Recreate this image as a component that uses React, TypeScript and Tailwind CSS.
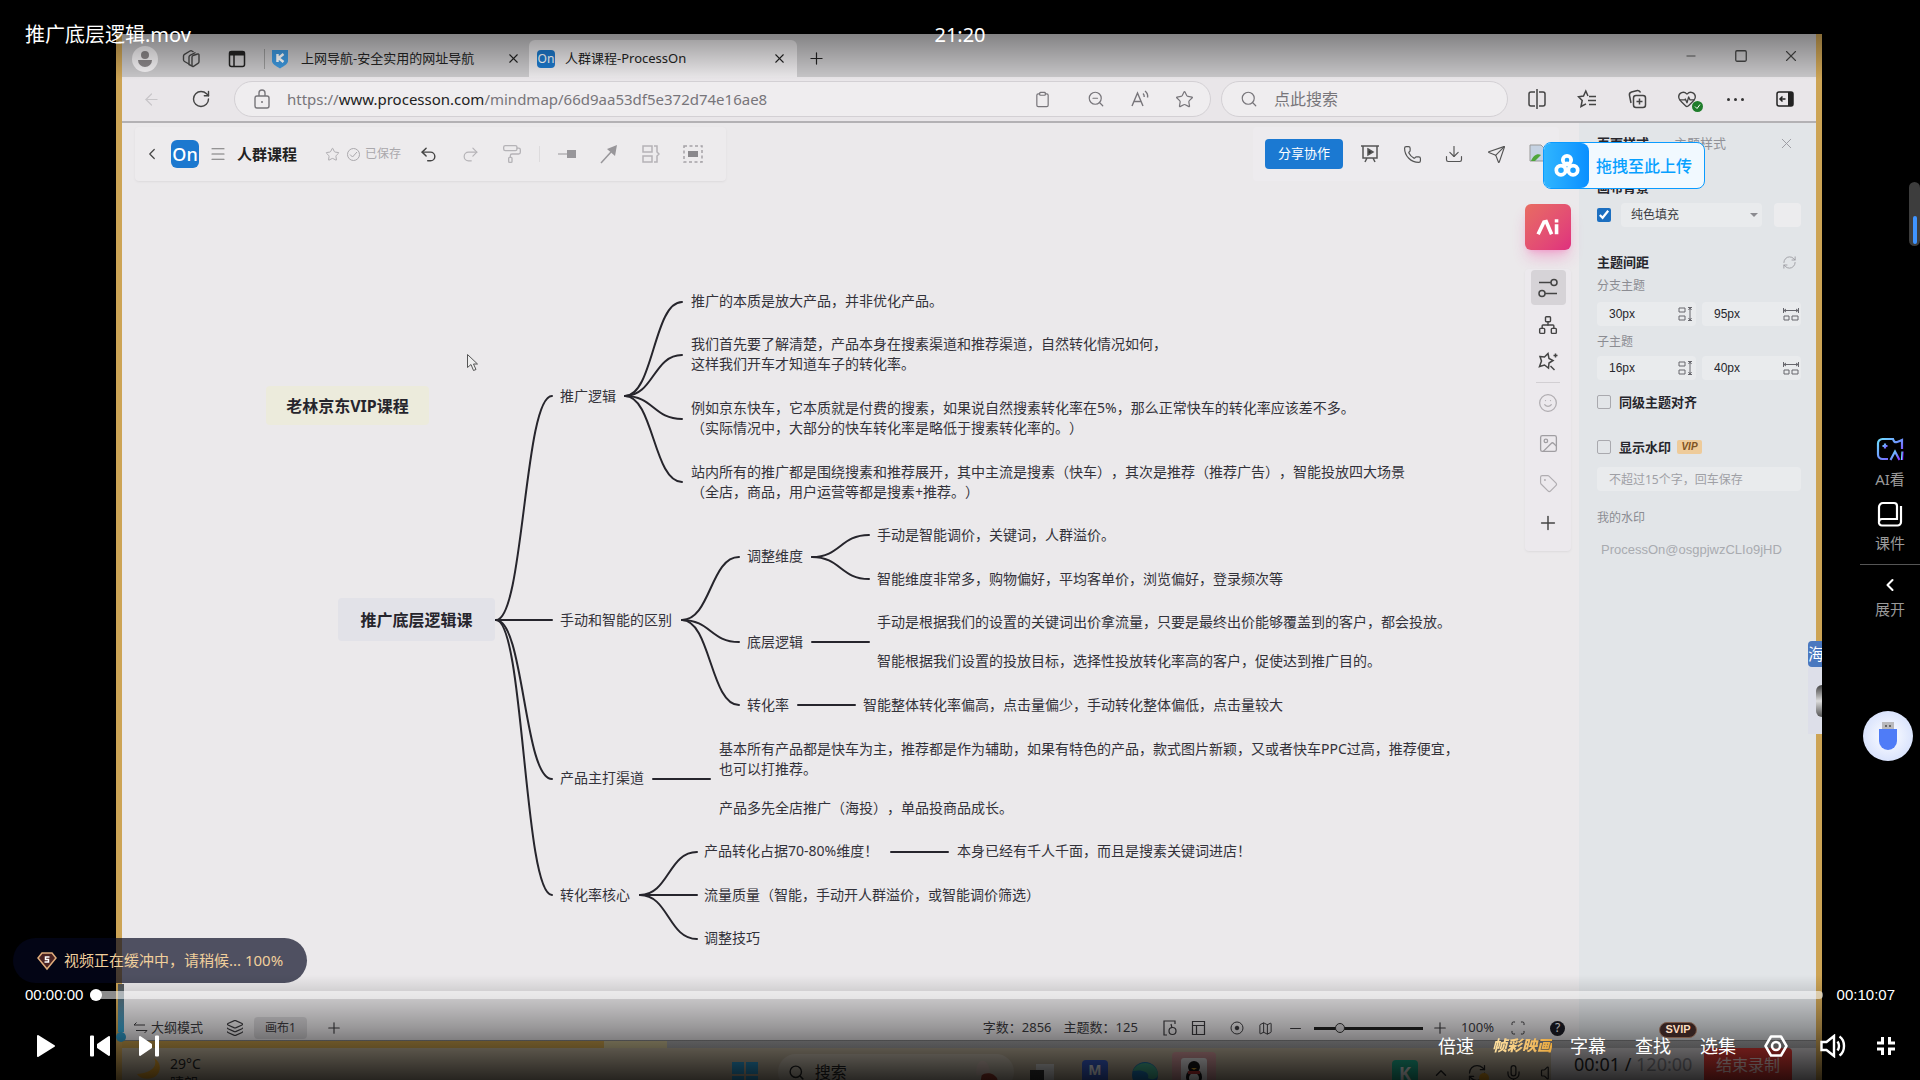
import type { ReactNode } from "react";
import {
  ArrowLeft,
  ChevronLeft,
  ChevronUp,
  Clipboard,
  Columns2,
  Download,
  HeartPulse,
  Image,
  Layers,
  Lock,
  Map as MapIcon,
  Menu,
  Mic,
  Minus,
  Network,
  PaintRoller,
  Phone,
  Plus,
  Redo2,
  RefreshCw,
  RotateCw,
  Scan,
  Search,
  Send,
  Smile,
  Square,
  Star,
  Tag,
  Undo2,
  Volume2,
  X,
  ZoomOut,
} from "lucide-react";

type MapNode = { x: number; y: number; lines: string[] };

// x is the left edge of the text, y the middle of the block
const nodes: MapNode[] = [
  { x: 569, y: 178, lines: ["推广的本质是放大产品，并非优化产品。"] },
  {
    x: 569,
    y: 231,
    lines: [
      "我们首先要了解清楚，产品本身在搜素渠道和推荐渠道，自然转化情况如何，",
      "这样我们开车才知道车子的转化率。",
    ],
  },
  {
    x: 569,
    y: 295,
    lines: [
      "例如京东快车，它本质就是付费的搜素，如果说自然搜素转化率在5%，那么正常快车的转化率应该差不多。",
      "（实际情况中，大部分的快车转化率是略低于搜素转化率的。）",
    ],
  },
  {
    x: 569,
    y: 359,
    lines: [
      "站内所有的推广都是围绕搜素和推荐展开，其中主流是搜素（快车），其次是推荐（推荐广告），智能投放四大场景",
      "（全店，商品，用户运营等都是搜素+推荐。）",
    ],
  },
  { x: 438, y: 273, lines: ["推广逻辑"] },
  { x: 438, y: 497, lines: ["手动和智能的区别"] },
  { x: 625, y: 433, lines: ["调整维度"] },
  { x: 755, y: 412, lines: ["手动是智能调价，关键词，人群溢价。"] },
  {
    x: 755,
    y: 456,
    lines: ["智能维度非常多，购物偏好，平均客单价，浏览偏好，登录频次等"],
  },
  { x: 625, y: 519, lines: ["底层逻辑"] },
  {
    x: 755,
    y: 499,
    lines: [
      "手动是根据我们的设置的关键词出价拿流量，只要是最终出价能够覆盖到的客户，都会投放。",
    ],
  },
  {
    x: 755,
    y: 538,
    lines: ["智能根据我们设置的投放目标，选择性投放转化率高的客户，促使达到推广目的。"],
  },
  { x: 625, y: 582, lines: ["转化率"] },
  {
    x: 741,
    y: 582,
    lines: ["智能整体转化率偏高，点击量偏少，手动转化整体偏低，点击量较大"],
  },
  { x: 438, y: 655, lines: ["产品主打渠道"] },
  {
    x: 597,
    y: 636,
    lines: [
      "基本所有产品都是快车为主，推荐都是作为辅助，如果有特色的产品，款式图片新颖，又或者快车PPC过高，推荐便宜，",
      "也可以打推荐。",
    ],
  },
  { x: 597, y: 685, lines: ["产品多先全店推广（海投），单品投商品成长。"] },
  { x: 438, y: 772, lines: ["转化率核心"] },
  { x: 582, y: 728, lines: ["产品转化占据70-80%维度！"] },
  { x: 835, y: 728, lines: ["本身已经有千人千面，而且是搜素关键词进店！"] },
  { x: 582, y: 772, lines: ["流量质量（智能，手动开人群溢价，或智能调价筛选）"] },
  { x: 582, y: 815, lines: ["调整技巧"] },
];

// [x1, y1, x2, y2]
const edges = [
  [374, 497, 430, 273],
  [374, 497, 430, 497],
  [374, 497, 430, 656],
  [374, 497, 430, 772],
  [503, 273, 560, 179],
  [503, 273, 560, 232],
  [503, 273, 560, 296],
  [503, 273, 560, 359],
  [560, 497, 617, 434],
  [560, 497, 617, 519],
  [560, 497, 617, 582],
  [690, 434, 747, 412],
  [690, 434, 747, 456],
  [690, 519, 747, 519],
  [676, 582, 733, 582],
  [531, 656, 588, 656],
  [518, 772, 575, 729],
  [518, 772, 575, 772],
  [518, 772, 575, 816],
  [769, 729, 826, 729],
];

const edgePath = ([x1, y1, x2, y2]: number[]) => {
  const mid = (x1 + x2) / 2;
  return `M${x1} ${y1} C${mid} ${y1} ${mid} ${y2} ${x2} ${y2}`;
};

const IconButton = ({
  label,
  className = "",
  children,
}: {
  label: string;
  className?: string;
  children: ReactNode;
}) => (
  <button
    type="button"
    aria-label={label}
    className={`flex shrink-0 items-center justify-center ${className}`}
  >
    {children}
  </button>
);

const BrowserTabs = () => (
  <div className="flex h-[43px] shrink-0 items-end bg-[#c9c8ca] text-[13px] text-[#222]">
    <div className="flex h-[37px] items-center">
      <IconButton label="用户" className="w-[46px]">
        <span className="flex size-[26px] flex-col items-center justify-center gap-px rounded-full bg-[#f4f2f4]">
          <span className="size-2 rounded-full bg-[#8b8789]" />
          <span className="h-[7px] w-3.5 rounded-t-sm rounded-b-full bg-[#8b8789]" />
        </span>
      </IconButton>
      <IconButton label="工作区" className="w-[46px]">
        <svg width="20" height="20" viewBox="0 0 20 20" fill="none" stroke="#444" strokeWidth="1.4">
          <path d="M12 6.5l4.500-1.500a1 1 0 011.500 1v6.500a2 2 0 01-1 1.800l-4.500 3a1 1 0 01-1.500-.8V8.200a2 2 0 011-1.700z" />
          <path d="M11 17l-3-1.500V8a2 2 0 011-1.700L14.500 3.500" />
          <path d="M8 15l-4.500-2.500a2 2 0 01-1-1.700V7a2 2 0 011-1.700L9 2a2 2 0 012 0l1.500.8" />
        </svg>
      </IconButton>
      <IconButton label="标签页操作" className="w-[46px]">
        <svg width="18" height="18" viewBox="0 0 18 18" fill="none" stroke="#222" strokeWidth="1.500">
          <rect x="1.500" y="1.500" width="15" height="15" rx="2" />
          <path d="M1.500 3.500h15" strokeWidth="4" />
          <path d="M6 5v11" />
        </svg>
      </IconButton>
    </div>
    <div className="mb-2 ml-1 h-5 w-px bg-[#999]" />
    <div className="flex h-[37px] w-[264px] items-center gap-3 pr-2 pl-1.5">
      <svg width="18" height="20" viewBox="0 0 18 20">
        <path d="M1 1h16v11c0 3-4 5-8 7.500C5 17 1 15 1 12z" fill="#3d97dd" />
        <path d="M6.500 5v8M12.500 5L7.500 9l5 4" stroke="#fff" strokeWidth="2.500" fill="none" />
      </svg>
      <span className="flex-1 whitespace-nowrap">上网导航-安全实用的网址导航</span>
      <IconButton label="关闭标签页">
        <X size={15} strokeWidth={1.7} />
      </IconButton>
    </div>
    <div className="flex h-[37px] w-[268px] items-center gap-2.5 rounded-t-md bg-[#ebe9eb] pr-2.5 pl-2">
      <span className="flex size-[18px] items-center justify-center rounded-sm bg-[#1d79cc] text-xs text-white">
        On
      </span>
      <span className="flex-1 whitespace-nowrap">人群课程-ProcessOn</span>
      <IconButton label="关闭标签页">
        <X size={15} strokeWidth={1.7} />
      </IconButton>
    </div>
    <IconButton label="新建标签页" className="ml-2.5 h-[37px]">
      <Plus size={19} strokeWidth={1.5} />
    </IconButton>
    <div className="ml-auto flex h-[43px] text-[#444]">
      <IconButton label="最小化" className="w-[50px]">
        <Minus size={14} strokeWidth={1.5} />
      </IconButton>
      <IconButton label="最大化" className="w-[50px]">
        <Square size={14} strokeWidth={2.2} />
      </IconButton>
      <IconButton label="关闭" className="w-[50px]">
        <X size={18} strokeWidth={1.5} />
      </IconButton>
    </div>
  </div>
);

const AddressBar = () => (
  <div className="flex h-[46px] shrink-0 items-center border-b-2 border-[#b3b1b4] bg-[#e9e6e9] px-1 text-[#444]">
    <IconButton label="后退" className="w-[50px] text-[#c8c6c9]">
      <ArrowLeft size={19} strokeWidth={1.5} />
    </IconButton>
    <IconButton label="刷新" className="w-[50px]">
      <RotateCw size={20} strokeWidth={1.7} />
    </IconButton>
    <div className="mr-2.5 ml-2 flex h-9 min-w-0 flex-1 items-center gap-4 rounded-full border border-[#d3d0d4] bg-[#efedef] pr-1 pl-[18px]">
      <svg width="18" height="20" viewBox="0 0 18 20" fill="none" stroke="#77757a" strokeWidth="1.400" className="shrink-0">
        <rect x="2" y="7" width="14" height="12" rx="2" />
        <path d="M6 7V4a3 3 0 016 0v3" />
        <circle cx="9" cy="13" r="1" fill="#77757a" stroke="none" />
      </svg>
      <span className="min-w-0 flex-1 overflow-hidden text-[15px] whitespace-nowrap text-[#77757a]">
        https://<span className="text-[#222]">www.processon.com</span>
        /mindmap/66d9aa53df5e372d74e16ae8
      </span>
      <div className="flex text-[#77757a]">
        <IconButton label="粘贴" className="mr-2.5 w-11">
          <Clipboard size={17} strokeWidth={1.7} />
        </IconButton>
        <IconButton label="缩放" className="w-11">
          <ZoomOut size={18} strokeWidth={1.6} />
        </IconButton>
        <IconButton label="朗读" className="w-11">
          <svg width="18" height="18" viewBox="0 0 18 18" fill="none" stroke="currentColor" strokeWidth="1.400">
            <path d="M1 16L6.500 3 12 16M3 11.500h7M12 3.500c1 .8 1.300 2 1.200 3.500M14 1c2 1.500 3 3.500 2.600 6.500" />
          </svg>
        </IconButton>
        <IconButton label="收藏" className="w-11">
          <Star size={19} strokeWidth={1.5} />
        </IconButton>
      </div>
    </div>
    <label className="mr-1 flex h-9 w-[287px] items-center gap-4 rounded-full border border-[#d3d0d4] bg-[#efedef] pl-[18px]">
      <Search size={18} strokeWidth={1.6} className="text-[#77757a]" />
      <input
        aria-label="搜索"
        placeholder="点此搜索"
        className="w-40 bg-transparent text-base outline-none placeholder:text-[#77757a]"
      />
    </label>
    <IconButton label="分屏" className="w-[50px]">
      <svg width="18" height="20" viewBox="0 0 18 20" fill="none" stroke="currentColor" strokeWidth="1.500">
        <path d="M7 3H3a2 2 0 00-2 2v10a2 2 0 002 2h4M11 3h4a2 2 0 012 2v10a2 2 0 01-2 2h-4M9 0v20" />
      </svg>
    </IconButton>
    <IconButton label="收藏夹" className="w-[50px]">
      <svg width="20" height="20" viewBox="0 0 20 20" fill="none" stroke="currentColor" strokeWidth="1.500">
        <path d="M11 7L8.800 2 6.500 7l-5 .7L5.200 11.500 4 17.500l5-2.700M12 7.500h7M11 11.500h8M12 15.500h7" />
      </svg>
    </IconButton>
    <IconButton label="集锦" className="w-[50px]">
      <svg width="20" height="20" viewBox="0 0 20 20" fill="none" stroke="currentColor" strokeWidth="1.500">
        <rect x="6.500" y="6.500" width="12" height="12" rx="2.500" />
        <path d="M12.500 9.500v6M9.500 12.500h6M4 14l-1.500-7.500A3 3 0 014.500 3l6-1.500a3 3 0 013 2" />
      </svg>
    </IconButton>
    <IconButton label="浏览器概要" className="relative w-[50px]">
      <HeartPulse size={20} strokeWidth={1.6} />
      <span className="absolute right-[9px] -bottom-[3px] flex size-[11px] items-center justify-center rounded-full bg-[#1f7d2b]">
        <svg width="7" height="7" viewBox="0 0 7 7" fill="none" stroke="#fff">
          <path d="M1 3.500l2 2 3-4" />
        </svg>
      </span>
    </IconButton>
    <IconButton label="更多" className="w-[46px] gap-1">
      <span className="size-[3px] rounded-full bg-[#333]" />
      <span className="size-[3px] rounded-full bg-[#333]" />
      <span className="size-[3px] rounded-full bg-[#333]" />
    </IconButton>
    <IconButton label="侧边栏" className="w-[54px]">
      <svg width="18" height="16" viewBox="0 0 18 16" fill="none" stroke="#222" strokeWidth="1.500">
        <rect x="1" y="1" width="16" height="14" rx="2" />
        <path d="M14.500 1v14" strokeWidth="5" />
        <path d="M9.500 8H4M6.500 5.500L4 8l2.500 2.500" />
      </svg>
    </IconButton>
  </div>
);

const MindMap = () => (
  <div className="absolute inset-0 overflow-hidden text-sm leading-5 whitespace-nowrap text-[#33323a] [text-spacing-trim:space-all]">
    <svg width="900" height="860" fill="none" stroke="#26252c" strokeWidth="2" strokeLinecap="round">
      {edges.map((edge) => (
        <path key={edge.join()} d={edgePath(edge)} />
      ))}
    </svg>
    {nodes.map(({ x, y, lines }) => (
      <div key={lines[0]} className="absolute" style={{ left: x, top: y - lines.length * 10 }}>
        {lines.map((line) => (
          <p key={line}>{line}</p>
        ))}
      </div>
    ))}
    <div className="absolute top-[263px] left-[144px] flex h-[39px] w-[163px] items-center justify-center rounded-sm bg-[#ecebdc] text-base font-bold text-[#26252c]">
      老林京东VIP课程
    </div>
    <div className="absolute top-[475px] left-[216px] flex h-[43px] w-[157px] items-center justify-center rounded-sm bg-[#e2e2e8] text-base font-bold text-[#26252c]">
      推广底层逻辑课
    </div>
    <svg className="absolute top-[230px] left-[344px]" width="14" height="19" viewBox="0 0 14 19">
      <path d="M1.500 1.500v13l3.500-3 2.500 6 2.500-1-2.500-5.500h4z" fill="#eee" stroke="#555" />
    </svg>
  </div>
);

const EditorHeader = () => (
  <header className="relative mt-1 flex items-start">
    <div className="ml-[13px] flex h-[54px] items-center rounded bg-[#edebed] pr-3 pl-2 text-[#444] shadow-sm shadow-black/5">
      <div className="flex items-center gap-2.5">
        <IconButton label="返回">
          <ChevronLeft size={18} strokeWidth={1.6} />
        </IconButton>
        <span className="flex size-7 items-center justify-center rounded-md bg-[#1c78cf] text-lg font-medium text-white">
          On
        </span>
        <IconButton label="菜单" className="text-[#777]">
          <Menu size={18} strokeWidth={1.5} />
        </IconButton>
        <span className="text-[15px] font-bold text-[#222]">人群课程</span>
      </div>
      <div className="ml-7 flex items-center text-xs text-[#aaa8ac]">
        <IconButton label="收藏">
          <Star size={15} strokeWidth={1.5} />
        </IconButton>
        <svg className="mr-1 ml-1.5" width="15" height="15" viewBox="0 0 15 15" fill="none" stroke="currentColor">
          <circle cx="7.500" cy="7.500" r="6" />
          <path d="M4 7.500l2.500 2.500L11 5" />
        </svg>
        已保存
      </div>
      <div className="ml-1.5 flex items-center text-[#b5b3b7]">
        <IconButton label="撤销" className="w-[42px] text-[#444]">
          <Undo2 size={19} strokeWidth={1.8} />
        </IconButton>
        <IconButton label="重做" className="w-[42px]">
          <Redo2 size={19} strokeWidth={1.5} />
        </IconButton>
        <IconButton label="格式刷" className="w-[42px]">
          <PaintRoller size={20} strokeWidth={1.6} />
        </IconButton>
        <div className="mx-1.5 h-4 w-px bg-[#dddbdd]" />
        <IconButton label="子主题" className="w-[42px]">
          <svg width="18" height="10" viewBox="0 0 18 10" fill="#98969a">
            <path d="M0 4.500h9v1H0zM9 1h9v8H9z" />
          </svg>
        </IconButton>
        <IconButton label="关系线" className="w-[42px]">
          <svg width="18" height="20" viewBox="0 0 18 20">
            <path d="M1 19L11 8" stroke="#98969a" strokeWidth="1.500" />
            <path d="M17 1L7 5l8 7z" fill="#98969a" />
          </svg>
        </IconButton>
        <IconButton label="概要" className="w-[42px]">
          <svg width="18" height="18" viewBox="0 0 18 18" fill="none" stroke="currentColor" strokeWidth="1.500">
            <path d="M1 1h9v6H1zM1 11h9v6H1zM12 1h3v6l2 2-2 2v6h-3" />
          </svg>
        </IconButton>
        <IconButton label="外框" className="w-[42px]">
          <svg width="20" height="18" viewBox="0 0 20 18" fill="none" stroke="#a5a3a7" strokeWidth="1.500">
            <rect x="1" y="1" width="18" height="16" strokeDasharray="3 2.500" />
            <rect x="5" y="6" width="10" height="6" fill="#8a888c" stroke="none" />
          </svg>
        </IconButton>
      </div>
    </div>
    <div className="mr-5 ml-auto flex h-[54px] items-center rounded bg-[#edebee] pl-3 text-[#555]">
      <button type="button" className="mr-1.5 h-[30px] w-[78px] rounded-sm bg-[#1b79d2] text-[13px] text-white">
        分享协作
      </button>
      <IconButton label="演示" className="w-[42px]">
        <svg width="18" height="20" viewBox="0 0 18 20" fill="none" stroke="currentColor" strokeWidth="1.500">
          <path d="M0 2h18M2 2v12h14V2M6 14l-2 4M12 14l2 4" />
          <path d="M7 5l5 3-5 3z" fill="#333" />
        </svg>
      </IconButton>
      <IconButton label="通话" className="w-[42px]">
        <Phone size={19} strokeWidth={1.5} />
      </IconButton>
      <IconButton label="下载" className="w-[42px]">
        <Download size={20} strokeWidth={1.4} />
      </IconButton>
      <IconButton label="分享" className="w-[42px]">
        <Send size={19} strokeWidth={1.5} />
      </IconButton>
      <IconButton label="头像" className="w-[42px]">
        <svg width="18" height="20" viewBox="0 0 18 20">
          <path d="M1 1h11l5 5v11H1z" fill="#c5d2e2" stroke="#999" />
          <path d="M2 17c2-5 6-8 10-6l-6 6z" fill="#4ea63a" />
        </svg>
      </IconButton>
    </div>
  </header>
);

const SideTools = () => (
  <div className="relative mr-2 flex flex-col items-center self-end pt-[23px] text-[#444]">
    <button
      type="button"
      aria-label="AI 助手"
      className="flex size-[46px] items-center justify-center rounded-md bg-linear-to-br from-[#e86c61] to-[#df2f7e] shadow-lg shadow-pink-500/30"
    >
      <svg width="24" height="18" viewBox="0 0 26 20" fill="none" stroke="#fff" strokeWidth="4">
        <path d="M2 18L8.500 4.500 11 4l6 14M22.500 7v11M22.500 1.500v3.500" />
      </svg>
    </button>
    <div className="mt-[19px] flex w-[46px] flex-col items-center rounded bg-[#ece9ed] pb-2 shadow-sm shadow-black/5">
      <IconButton label="样式" className="h-[37px]">
        <span className="flex size-[35px] items-center justify-center rounded-sm bg-[#d6d3d7]">
          <svg width="20" height="20" viewBox="0 0 20 20" fill="none" stroke="currentColor" strokeWidth="1.500">
            <circle cx="16" cy="4.500" r="3" />
            <circle cx="4" cy="15.500" r="3" />
            <path d="M1 4.500h12M7 15.500h12" />
          </svg>
        </span>
      </IconButton>
      <IconButton label="结构" className="h-[37px]">
        <Network size={20} strokeWidth={1.7} />
      </IconButton>
      <IconButton label="主题" className="h-[37px]">
        <svg width="20" height="20" viewBox="0 0 20 20" fill="none" stroke="currentColor" strokeWidth="1.500">
          <path d="M2 4.500l4.500.5L10 1.500l1 5 4 2-4 2.500-.5 5-4-3-5 1.500L3.500 9z" />
          <path d="M12.500 14l4 4" />
          <path d="M17.500 1.500v4M15.500 3.500h4" />
        </svg>
      </IconButton>
      <div className="mt-0.5 h-px w-6 bg-[#d2cfd3]" />
      <IconButton label="表情" className="h-10 text-[#b0adb1]">
        <Smile size={20} strokeWidth={1.5} />
      </IconButton>
      <IconButton label="图片" className="h-10 text-[#a09ea2]">
        <Image size={21} strokeWidth={1.5} />
      </IconButton>
      <IconButton label="标签" className="h-10 text-[#b0adb1]">
        <Tag size={19} strokeWidth={1.5} />
      </IconButton>
      <IconButton label="添加" className="h-10">
        <Plus size={22} strokeWidth={1.6} />
      </IconButton>
    </div>
  </div>
);

const StatusBar = () => (
  <footer className="relative mt-auto flex h-6 items-center pr-3.5 pl-[11px] text-[13px] whitespace-nowrap text-[#3c3b3f]">
    <svg width="16" height="12" viewBox="0 0 16 12" fill="none" stroke="currentColor">
      <path d="M3.500 .5L1 3h11M3 8.500h11L11.500 11" />
    </svg>
    <span className="ml-0.5">大纲模式</span>
    <Layers size={18} strokeWidth={1.5} className="ml-[23px]" />
    <button type="button" className="ml-2.5 h-[22px] w-[53px] rounded-sm bg-[#d3d1d4] text-xs">
      画布1
    </button>
    <IconButton label="新建画布" className="ml-[18px]">
      <Plus size={18} strokeWidth={1.5} />
    </IconButton>
    <span className="ml-auto">字数：2856</span>
    <span className="ml-3">主题数：125</span>
    <div className="ml-6 flex items-center gap-[13px]">
      <svg width="16" height="16" viewBox="0 0 16 16" fill="none" stroke="currentColor" strokeWidth="1.200">
        <path d="M5 15H2V1h11v3" />
        <circle cx="10.500" cy="11" r="3.500" />
        <path d="M9 4l1 4" />
      </svg>
      <svg width="15" height="16" viewBox="0 0 15 16" fill="none" stroke="currentColor" strokeWidth="1.200">
        <path d="M1.500 1.500h12v13h-12zM1.500 5.500h12M5.500 5.500v9" />
      </svg>
    </div>
    <svg className="ml-6" width="14" height="14" viewBox="0 0 14 14" fill="none" stroke="currentColor">
      <circle cx="7" cy="7" r="6" />
      <circle cx="7" cy="7" r="1.800" fill="currentColor" />
    </svg>
    <MapIcon size={15} strokeWidth={1.6} className="ml-3.5" />
    <IconButton label="缩小" className="mr-2.5 ml-3.5">
      <Minus size={17} strokeWidth={1.5} />
    </IconButton>
    <input
      type="range"
      aria-label="画布缩放"
      defaultValue={21}
      className="h-[3px] w-[109px] appearance-none bg-[#222] [&::-webkit-slider-thumb]:size-[10px] [&::-webkit-slider-thumb]:appearance-none [&::-webkit-slider-thumb]:rounded-full [&::-webkit-slider-thumb]:border [&::-webkit-slider-thumb]:border-[#333] [&::-webkit-slider-thumb]:bg-[#d8d6d9]"
    />
    <IconButton label="放大" className="ml-2">
      <Plus size={18} strokeWidth={1.5} />
    </IconButton>
    <span className="ml-3">100%</span>
    <Scan size={16} strokeWidth={1.5} className="ml-4" />
    <span className="ml-6 flex size-[15px] items-center justify-center rounded-full bg-[#1c1c26] text-xs text-white">
      ?
    </span>
  </footer>
);

const SpacingField = ({
  label,
  value,
  vertical,
}: {
  label: string;
  value: string;
  vertical?: boolean;
}) => (
  <label className="flex h-6 flex-1 items-center justify-between rounded-sm bg-[#e9ebed] pr-0.5 pl-3">
    <input
      aria-label={label}
      defaultValue={value}
      className="w-12 bg-transparent font-['Liberation_Sans',sans-serif] text-xs outline-none"
    />
    <svg width="16" height="14" viewBox="0 0 16 14" fill="none" stroke="#66666c">
      {vertical ? (
        <path d="M1 1h6v4H1zM1 9h6v4H1zM10 .5h4M10 13.500h4M12 1v12M10.500 3L12 1l1.500 2M10.500 11l1.500 2 1.500-2" />
      ) : (
        <path d="M1 9h5v4H1zM9 9h6v4H9zM.5 1v5M15.500 1v5M1 3.500h14M3 2L1 3.500 3 5M13 2l2 1.500L13 5" />
      )}
    </svg>
  </label>
);

const StylePanel = () => (
  <aside className="flex w-[237px] shrink-0 flex-col bg-[#e2e5e8] pt-2.5 pr-[15px] pl-[18px] text-[13px] leading-5 text-[#26262c]">
    <div className="flex items-center">
      <h2 className="font-bold">页面样式</h2>
      <span className="ml-[25px] text-[#909197]">主题样式</span>
      <IconButton label="关闭面板" className="mr-1.5 ml-auto text-[#99999f]">
        <X size={17} strokeWidth={1.3} />
      </IconButton>
    </div>
    <h3 className="mt-6 font-bold">画布背景</h3>
    <div className="mt-1.5 flex h-6 items-center">
      <input type="checkbox" aria-label="画布背景" defaultChecked className="size-3.5 accent-[#1c6fc0]" />
      <span className="relative mr-3 ml-2.5 flex-1">
        <select
          aria-label="填充方式"
          className="h-6 w-full appearance-none rounded-sm bg-[#e9ebed] pl-2.5 text-xs text-[#3c3c42]"
        >
          <option>纯色填充</option>
        </select>
        <span className="absolute top-2.5 right-1 border-x-4 border-t-4 border-x-transparent border-t-[#8b8b90]" />
      </span>
      <button type="button" aria-label="填充颜色" className="h-6 w-[27px] rounded-sm bg-[#ececee]" />
    </div>
    <div className="mt-[25px] flex items-center justify-between pr-1">
      <h3 className="font-bold">主题间距</h3>
      <IconButton label="重置间距" className="text-[#99999f]">
        <RefreshCw size={15} strokeWidth={1.4} />
      </IconButton>
    </div>
    <p className="mt-1 text-xs leading-5 text-[#8b8c92]">分支主题</p>
    <div className="mt-1.5 flex gap-1.5">
      <SpacingField label="分支主题垂直间距" value="30px" vertical />
      <SpacingField label="分支主题水平间距" value="95px" />
    </div>
    <p className="mt-1.5 text-xs leading-5 text-[#8b8c92]">子主题</p>
    <div className="mt-1 flex gap-1.5">
      <SpacingField label="子主题垂直间距" value="16px" vertical />
      <SpacingField label="子主题水平间距" value="40px" />
    </div>
    <label className="mt-3 flex items-center gap-2 font-bold">
      <input type="checkbox" className="size-3.5 appearance-none rounded-xs border border-[#a9a9ae]" />
      同级主题对齐
    </label>
    <label className="mt-[25px] flex items-center gap-2 font-bold">
      <input type="checkbox" className="size-3.5 appearance-none rounded-xs border border-[#a9a9ae]" />
      显示水印
      <span className="-ml-0.5 flex h-3.5 w-[25px] items-center justify-center rounded-xs bg-[#eecb9a] font-['Liberation_Sans',sans-serif] text-[10px] text-[#7d5223] italic">
        VIP
      </span>
    </label>
    <input
      aria-label="水印文字"
      placeholder="不超过15个字，回车保存"
      className="mt-2.5 h-6 rounded-sm bg-[#e9ebed] px-3 text-xs outline-none placeholder:text-[#9fa0a5]"
    />
    <p className="mt-[17px] text-xs leading-5 text-[#8b8c92]">我的水印</p>
    <p className="mt-3 pl-1 font-['Liberation_Sans',sans-serif] text-[13px] leading-5 text-[#a9abb0]">
      ProcessOn@osgpjwzCLIo9jHD
    </p>
  </aside>
);

const Taskbar = () => (
  <div className="flex h-8 shrink-0 items-start overflow-hidden bg-[#c0b49e] whitespace-nowrap text-[#222]">
    <div className="flex w-[36%] gap-2 pt-1.5 pl-3.5">
      <svg width="26" height="26" viewBox="0 0 26 26">
        <path d="M18 4c4 7-1 15-17 16 4 6 14 6 19 2s6-13-2-18z" fill="#e5a32a" />
      </svg>
      <div className="text-sm leading-[19px]">
        <p>29°C</p>
        <p>晴朗</p>
      </div>
    </div>
    <svg className="mt-3.5 shrink-0" width="26" height="26" viewBox="0 0 26 26" fill="#2fa3dd">
      <path d="M0 0h12v12H0zM14 0h12v12H14zM0 14h12v12H0zM14 14h12v12H14z" />
    </svg>
    <div className="mt-1.5 ml-5 flex h-9 w-[236px] shrink-0 items-center rounded-full bg-[#cdc4b4] pl-2.5 text-base">
      <Search size={17} strokeWidth={2} />
      <span className="ml-2.5">搜索</span>
      <svg className="mr-3.5 ml-auto" width="28" height="28" viewBox="0 0 28 32">
        <path d="M3 20C2 8 6 3 10 3s9 6 8 15z" fill="#d9c3ba" />
        <path d="M9 20c4-4 14-4 18 4v8H7z" fill="#9c3a2c" />
      </svg>
    </div>
    <div className="flex">
      <svg className="mt-4 ml-4 shrink-0" width="24" height="24" viewBox="0 0 24 24">
        <path d="M6 0h18v16H6z" fill="#ddd" />
        <path d="M0 6h14v18H0z" fill="#333" />
      </svg>
      <span className="mt-3 ml-7 flex size-[26px] justify-center rounded bg-[#3c64d8] text-sm leading-5 font-bold text-white">
        M
      </span>
      <svg className="mt-3.5 ml-6 shrink-0" width="26" height="26" viewBox="0 0 26 26">
        <circle cx="13" cy="13" r="13" fill="#1c7fc4" />
        <path d="M1 9C5-2 24-2 26 12c0 6-8 6-10 4 2-6-6-9-15-7z" fill="#4cc3a0" />
      </svg>
      <span className="mt-1 ml-3.5 flex h-10 w-11 items-center justify-center rounded bg-[#d49a9d]">
        <svg width="26" height="28" viewBox="0 0 26 28">
          <rect width="26" height="28" rx="3" fill="#f3f1f2" />
          <circle cx="13" cy="9" r="6" fill="#151515" />
          <ellipse cx="13" cy="19" rx="8" ry="8" fill="#151515" />
          <ellipse cx="13" cy="20" rx="5" ry="5" fill="#fff" />
          <path d="M7 13h12v3H7z" fill="#c63333" />
          <path d="M10 10h6l-3 2z" fill="#efb02e" />
        </svg>
      </span>
    </div>
    <div className="-mr-4 ml-auto flex items-center pt-3">
      <span className="flex w-9 justify-center">
        <span className="flex size-[26px] items-center justify-center rounded bg-[#1fb592] text-lg leading-5 font-bold text-white">
          K
        </span>
      </span>
      <IconButton label="显示隐藏的图标" className="w-9">
        <ChevronUp size={18} />
      </IconButton>
      <span className="relative flex w-9 justify-center">
        <RefreshCw size={20} strokeWidth={1.5} />
        <span className="absolute right-1.5 bottom-0 size-2.5 rounded-full bg-[#e09b1d]" />
      </span>
      <span className="flex w-9 justify-center">
        <Mic size={19} strokeWidth={1.6} />
      </span>
      <span className="flex w-9 justify-center">
        <Volume2 size={18} strokeWidth={1.6} />
      </span>
    </div>
    <div className="relative flex h-10 w-[265px] shrink-0 items-start bg-[#d3cfd2] pl-[23px]">
      <span className="pt-1 text-lg leading-6">
        00:01 / <span className="text-[#85858c]">120:00</span>
      </span>
      <button
        type="button"
        className="mr-6 ml-auto h-10 w-[88px] rounded-sm bg-[#e33a35] pb-1.5 text-base text-white/80"
      >
        结束录制
      </button>
    </div>
  </div>
);

const RecordedScreen = () => (
  <section className="relative mr-[98px] ml-[116px] flex min-h-0 flex-1 flex-col overflow-hidden border-x-[6px] border-[#cda455] bg-[#ebe9eb]">
    <BrowserTabs />
    <AddressBar />
    <div className="flex min-h-0 flex-1">
      <main className="relative flex min-w-0 flex-1 flex-col">
        <MindMap />
        <EditorHeader />
        <SideTools />
        <StatusBar />
      </main>
      <StylePanel />
    </div>
    <div className="flex h-2 shrink-0 border-t border-[#8a8a8c]">
      <div className="w-[482px] bg-[#c9a04c]" />
      <div className="w-[63px] bg-[#c9bd92]" />
      <div className="flex-1 bg-[#a9a9ab]" />
    </div>
    <Taskbar />
  </section>
);

const RightRail = () => (
  <nav className="absolute top-[435px] right-0 flex w-[60px] flex-col items-center text-[15px] leading-5 text-[#9a9a9a]">
    <button type="button" className="flex flex-col items-center gap-1.5">
      <svg width="28" height="28" viewBox="0 0 28 28" fill="none" stroke="url(#ai)" strokeWidth="2.200">
        <defs>
          <linearGradient id="ai" x1="0" y1="0" x2="1" y2="1">
            <stop offset="0" stopColor="#6fe0ff" />
            <stop offset=".55" stopColor="#6f8cff" />
            <stop offset="1" stopColor="#8a2bff" />
          </linearGradient>
        </defs>
        <path d="M12 24H6.500A4.500 4.500 0 012 19.500v-11A4.500 4.500 0 016.500 4H17q1 4 4 3t5-2v9" />
        <path d="M14.500 25l4.500-8.500 4.500 8.500" />
        <path d="M26.500 16.500L26 25" />
        <path d="M9 8.500v5M6.500 11h5" />
      </svg>
      AI看
    </button>
    <button type="button" className="mt-3 flex flex-col items-center gap-1.5">
      <svg width="26" height="26" viewBox="0 0 26 26" fill="none" stroke="#fff" strokeWidth="2.200">
        <path d="M6 2h11a3 3 0 013 3v13H5a3 3 0 00-3 3V6a4 4 0 014-4zM2 21a3 3 0 003 3.500h15.500a3.500 3.500 0 003.500-3.500V5" />
      </svg>
      课件
    </button>
    <div className="mt-[11px] h-px w-full bg-[#555]" />
    <button type="button" className="mt-2.5 flex flex-col items-center gap-1">
      <ChevronLeft size={20} strokeWidth={2.5} className="text-white" />
      展开
    </button>
  </nav>
);

const PlayerControls = () => (
  <div className="absolute inset-x-0 bottom-0 h-[98px] text-white">
    <div className="flex h-[26px] items-center pr-[25px] pl-[25px] font-['Liberation_Sans',sans-serif] text-[15px]">
      <span>00:00:00</span>
      <input
        type="range"
        aria-label="播放进度"
        defaultValue={0}
        className="mr-3.5 ml-[7px] h-2 flex-1 appearance-none rounded-full bg-white/55 [&::-webkit-slider-thumb]:size-3 [&::-webkit-slider-thumb]:appearance-none [&::-webkit-slider-thumb]:rounded-full [&::-webkit-slider-thumb]:bg-white"
      />
      <span>00:10:07</span>
    </div>
    <div className="flex h-[76px] items-center pr-[22px] pl-[34px] text-lg">
      <IconButton label="播放" className="w-6">
        <svg width="20" height="24" viewBox="0 0 20 24" fill="#fff" stroke="#fff" strokeWidth="2" strokeLinejoin="round">
          <path d="M2 2l16 10L2 22z" />
        </svg>
      </IconButton>
      <IconButton label="上一个" className="ml-[30px] w-6">
        <svg width="22" height="22" viewBox="0 0 22 22" fill="#fff" stroke="#fff" strokeWidth="2" strokeLinejoin="round">
          <path d="M20 2L9 9.500v3l11 7.500zM2 1.500v19h2v-19z" />
        </svg>
      </IconButton>
      <IconButton label="下一个" className="ml-[25px] w-6">
        <svg width="22" height="22" viewBox="0 0 22 22" fill="#fff" stroke="#fff" strokeWidth="2" strokeLinejoin="round">
          <path d="M2 2l11 7.500v3L2 20zM18 1.500v19h2v-19z" />
        </svg>
      </IconButton>
      <button type="button" className="ml-auto">
        倍速
      </button>
      <button
        type="button"
        className="ml-[18px] bg-linear-to-r from-[#ffe2a3] to-[#e9a93d] bg-clip-text text-[15px] font-black text-transparent italic"
      >
        帧彩映画
      </button>
      <button type="button" className="ml-[18px]">
        字幕
      </button>
      <button type="button" className="relative ml-[29px]">
        查找
        <span className="absolute bottom-[22px] left-6 flex h-4 w-[38px] items-center justify-center rounded-full border border-[#7b5a49] bg-[#33211f] font-['Liberation_Sans',sans-serif] text-[11px] font-bold text-[#fbdcc0]">
          SVIP
        </span>
      </button>
      <button type="button" className="ml-[29px]">
        选集
      </button>
      <IconButton label="设置" className="ml-7 w-6">
        <svg width="24" height="22" viewBox="0 0 24 22" fill="none" stroke="#fff" strokeWidth="2.500" strokeLinejoin="round">
          <path d="M7 1.500h10L22.500 11 17 20.500H7L1.500 11z" />
          <circle cx="12" cy="11" r="4" />
        </svg>
      </IconButton>
      <IconButton label="音量" className="ml-8 w-[26px]">
        <svg width="26" height="24" viewBox="0 0 26 24" fill="none" stroke="#fff" strokeWidth="2.400">
          <path d="M1.500 8h5L14 2v20l-7.500-6h-5zM17.500 7.500c2 2.500 2 6.500 0 9M19.500 2.500c6 4 6 15 0 19" />
        </svg>
      </IconButton>
      <IconButton label="退出全屏" className="ml-7 w-6">
        <svg width="20" height="20" viewBox="0 0 20 20" fill="none" stroke="#fff" strokeWidth="3">
          <path d="M1 7h5.500V1M19 7h-5.500V1M1 13h5.500v6M19 13h-5.500v6" />
        </svg>
      </IconButton>
    </div>
  </div>
);

const App = () => (
  <div className="relative flex h-screen flex-col overflow-hidden bg-black pt-[34px] font-['Noto_Sans','Noto_Sans_CJK_SC',sans-serif]">
    <RecordedScreen />

    {/* things of the recorded desktop that are cut off by the frame edges */}
    <div className="absolute top-[641px] right-[98px] w-3.5 overflow-hidden">
      <div className="h-[26px] rounded-l bg-[#4a78bf] text-base leading-[26px] text-white">海</div>
      <div className="flex h-[67px] items-center justify-end bg-[#dddfe9]">
        <span className="h-8 w-1.5 rounded-l-full bg-linear-to-b from-[#444] via-[#ddd] to-[#555]" />
      </div>
    </div>
    <div className="absolute bottom-[38px] left-[116px] h-[58px] w-2.5 overflow-hidden">
      <div className="mx-auto h-12 w-1.5 bg-linear-to-b from-[#555] to-[#31a9d8]" />
      <div className="h-2.5 rounded-full bg-[#31a0cf]" />
    </div>

    <div className="pointer-events-none absolute inset-x-0 top-0 h-20 bg-linear-to-b from-black/60 to-transparent" />
    <div className="pointer-events-none absolute inset-x-0 bottom-0 h-[105px] bg-linear-to-t from-black/80 via-black/35 to-transparent" />

    <h1 className="absolute top-[21px] left-[25px] text-xl leading-7 text-white">推广底层逻辑.mov</h1>
    <time className="absolute inset-x-0 top-[21px] text-center text-xl leading-7 text-white">21:20</time>

    <button
      type="button"
      className="absolute top-[142px] right-[215px] flex h-[47px] w-[162px] items-center overflow-hidden rounded-lg border border-[#0a9bff] bg-[#f1f9ff] text-base font-medium text-[#06a0ff]"
    >
      <span className="mr-[7px] flex h-full w-[45px] items-center justify-center rounded-r-lg bg-linear-to-r from-[#2fb5ff] to-[#0a8fff]">
        <svg width="26" height="26" viewBox="0 0 28 28" fill="none" stroke="#fff" strokeWidth="4">
          <circle cx="14" cy="7.500" r="4.500" />
          <circle cx="7.500" cy="18.500" r="5" />
          <circle cx="20.500" cy="18.500" r="5" />
          <path d="M11 14l3-2.500 3 2.500" />
        </svg>
      </span>
      拖拽至此上传
    </button>

    <div className="absolute top-[182px] right-0 h-16 w-[11px] rounded-full bg-[#3d3d3d]">
      <div className="mx-auto mt-[34px] h-7 w-1 rounded-full bg-[#3f94ff]" />
    </div>
    <RightRail />
    <button
      type="button"
      aria-label="U 盘"
      className="absolute top-[711px] right-[7px] flex size-[50px] items-center justify-center rounded-full bg-radial from-white to-[#cbd8fb]"
    >
      <svg width="20" height="30" viewBox="0 0 20 30">
        <path d="M4 1h12v8H4z" fill="#b9b9bd" />
        <path d="M7 4h2v2H7zM11 4h2v2h-2z" fill="#666" />
        <path d="M1 8h18v12a9 9 0 01-18 0z" fill="#4f7cf7" />
      </svg>
    </button>

    <div className="absolute bottom-[97px] left-[13px] flex h-[45px] w-[294px] items-center gap-[7px] rounded-full bg-[#04081f]/68 pl-6 text-[15px] whitespace-nowrap text-[#f0cf9c]">
      <svg width="20" height="20" viewBox="0 0 20 20" fill="#4a2322" stroke="#e0ad7c" strokeWidth="1.500">
        <path d="M5 2h10l4 5-9 11L1 7z" />
        <path d="M12.500 6H8.500v2.500h3V11H7.500" fill="none" stroke="#fff" />
      </svg>
      视频正在缓冲中，请稍候... 100%
    </div>
    <PlayerControls />
  </div>
);

export default App;
